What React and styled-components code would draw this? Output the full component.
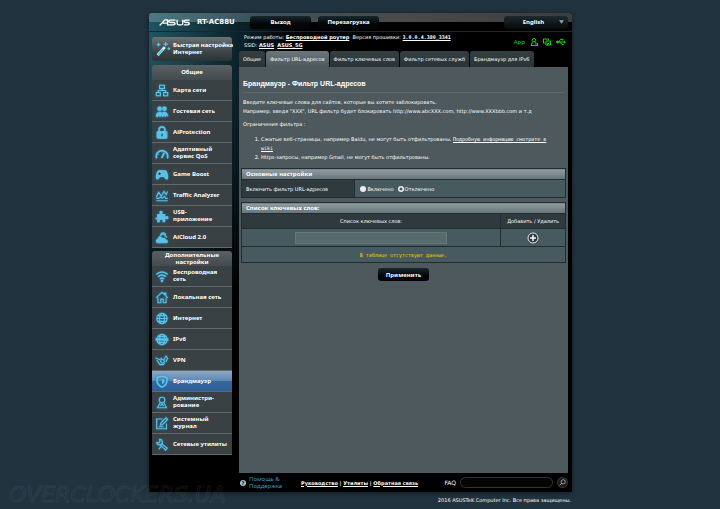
import React, { useState } from "react";
import styled, { createGlobalStyle } from "styled-components";

const icons = {
  map: (
    <>
      <rect x="5" y="1.5" width="6" height="4" />
      <rect x="1" y="10.5" width="5" height="4" />
      <rect x="10" y="10.5" width="5" height="4" />
      <path d="M8 5.5v2.5M3.5 10.5V8h9v2.5" />
    </>
  ),
  guests: (
    <g fill="currentColor" strokeWidth="0.5">
      <circle cx="5" cy="4.5" r="2.7" />
      <circle cx="11" cy="4.5" r="2.7" />
      <path d="M0.5 14c0-4 2-5.500 4.500-5.500S8 9 8 11c0-2 1-2.500 3-2.500s4.500 1.500 4.500 5.500l-2-1-1.500 2-1.500-2-1.500 2L7 13l-1.500 2L4 13l-1.500 2z" />
    </g>
  ),
  lock: (
    <>
      <path d="M4.500 7V4.500a3.500 3.500 0 0 1 7 0V7" strokeWidth="2" />
      <rect x="2" y="7" width="12" height="8" rx="1" fill="currentColor" />
      <path d="M8 9.500v3" stroke="#2c3a40" />
    </>
  ),
  gauge: (
    <>
      <path d="M1.500 14a7 7 0 1 1 13 0" strokeWidth="2.200" />
      <path d="M7.500 13.500l3.500-6.500" strokeWidth="2.200" />
      <path d="M3.500 9l1 .5M8 5.500v1" />
    </>
  ),
  game: (
    <>
      <path
        d="M4 3.500h8c2 0 3.500 8 2.800 9.500s-2.500 0-4.300-2.500h-5C3.700 13 2 14.500 1.200 13S2 3.500 4 3.500z"
        fill="currentColor"
      />
      <path d="M3.500 7h3M5 5.500v3M10.500 6h.1M12 8h.1" stroke="#2c3a40" />
    </>
  ),
  traffic: (
    <>
      <path d="M1 10l3-6 3 5 3.500-6L13 7l2-4" />
      <path d="M1 11.500h3l2-1.500 2 1.500 3-2.500 1.500 2.500H15M1 14.500h14" />
    </>
  ),
  puzzle: (
    <path
      d="M2 5h3.500C4 2 5 1 6.800 1s2.700 1.500 1.400 4H12v3c3-1.500 4-.3 4 1.400s-1.500 2.500-4 1.300V15H8.500c1-2.300 0-3-1.500-3s-2.500 1-1.300 3H2v-3.500C0 12.500-.5 11 .3 9.500L2 9z"
      fill="currentColor"
      strokeWidth="0"
    />
  ),
  cloud: (
    <>
      <path d="M3 9l6-6 5 5M6 4.500C8 1 12 1.500 12.500 5" />
      <path
        d="M3 14.500c-3-.5-2.500-4 0-4 .5-3 4.500-3.500 5.500-1 2-1 3.500 0 3.500 1.500 3.500 0 3 3.500 1 3.500z"
        fill="currentColor"
      />
    </>
  ),
  wifi: (
    <>
      <path
        d="M1 5.500c4-4 10-4 14 0M3.200 8.300c3-3 6.600-3 9.600 0M5.500 11c1.500-1.500 3.500-1.500 5 0"
        strokeWidth="1.900"
      />
      <circle cx="8" cy="13.500" r="1" fill="currentColor" />
    </>
  ),
  home: <path d="M.8 8.500L8 1.500l3 3V2.500h1.800v3.800l2.400 2.200M3 8v6.500h3.500V10h3v4.500H13V8" />,
  globe: (
    <>
      <circle cx="8" cy="8" r="6.300" />
      <ellipse cx="8" cy="8" rx="3" ry="6.300" />
      <path d="M1.700 8h12.600M3 4.500h10M3 11.500h10" />
    </>
  ),
  ipv6: (
    <>
      <circle cx="8" cy="8" r="6.300" />
      <ellipse cx="8" cy="8" rx="3" ry="6.300" />
      <path d="M3 4.500h10M3 11.500h10" />
      <path d="M0 8h16" strokeWidth="3" />
    </>
  ),
  vpn: (
    <>
      <path d="M0 4.500l5 2.500 3-2M1.500 7.500l4 5.500h4l2-2" />
      <circle cx="8.500" cy="9" r="2.300" />
      <path d="M10 7.500l3-5 2 3-2.500 4.500" />
    </>
  ),
  shield: (
    <>
      <path d="M8 1.500L14 3v4.500c0 3.500-2.500 6-6 7.500-3.500-1.500-6-4-6-7.500V3z" strokeWidth="2" />
      <path d="M8 5v6.500c2-1 3-2 3-4.500V5.500z" fill="currentColor" strokeWidth="0" />
    </>
  ),
  admin: (
    <>
      <circle cx="8" cy="5" r="3.500" />
      <path d="M5.500 8.500L2.500 14.500h11l-3-6M6 12l2-2 2 2" />
    </>
  ),
  log: (
    <>
      <path d="M13.500 8v6.500h-12v-12H9" />
      <path d="M6 10l.5-2.500L13 1l2 2-6.500 6.500zM4 12h6" />
    </>
  ),
  tools: (
    <>
      <path d="M5 1.500a3.500 3.500 0 1 1-3.500 4L4 6l1.500-1.500z" />
      <path d="M8 7.500l6.500 5-2 2.500-6-6z" />
      <path d="M7 10l-3 4" />
    </>
  )
};

const Icon = ({ name }) => (
  <IconSvg viewBox="0 0 16 16" aria-hidden="true">
    {icons[name]}
  </IconSvg>
);

const menus = [
  {
    title: "Общие",
    items: [
      ["map", "Карта сети"],
      ["guests", "Гостевая сеть"],
      ["lock", "AiProtection"],
      ["gauge", "Адаптивный\nсервис QoS"],
      ["game", "Game Boost"],
      ["traffic", "Traffic Analyzer"],
      ["puzzle", "USB-\nприложение"],
      ["cloud", "AiCloud 2.0"]
    ]
  },
  {
    title: "Дополнительные\nнастройки",
    items: [
      ["wifi", "Беспроводная\nсеть"],
      ["home", "Локальная сеть"],
      ["globe", "Интернет"],
      ["ipv6", "IPv6"],
      ["vpn", "VPN"],
      ["shield", "Брандмауэр"],
      ["admin", "Администри-\nрование"],
      ["log", "Системный\nжурнал"],
      ["tools", "Сетевые утилиты"]
    ]
  }
];

const tabs = [
  "Общие",
  "Фильтр URL-адресов",
  "Фильтр ключевых слов",
  "Фильтр сетевых служб",
  "Брандмауэр для IPv6"
];

const Header = () => (
  <TopBar>
    <Brand>
      <Logo viewBox="0 0 94 20" role="img" aria-label="ASUS">
        <path d="M2 19L18 2h8v17M11 12h13M50 3H35q-6 0-6 3.500t6 3.500h9q5 0 5 3.500t-5 3.500H28M55 2v10q0 5 5 5h7q5 0 5-5V2M93 3H81q-5 0-5 3.500t5 3.500h6q5 0 5 3.500t-5 3.500H75" />
      </Logo>
      <Model>RT-AC88U</Model>
    </Brand>
    <DarkButton>Выход</DarkButton>
    <DarkButton>Перезагрузка</DarkButton>
    <LangBox>
      <Lang aria-label="Язык">
        <option>English</option>
      </Lang>
      <Arrow viewBox="0 0 6 4" aria-hidden="true">
        <path d="M0 0h6L3 4z" />
      </Arrow>
    </LangBox>
  </TopBar>
);

const Sidebar = () => (
  <Side>
    <QuickButton>
      <Wand viewBox="0 0 18 18" aria-hidden="true">
        <path d="M3 16L11 7" stroke="#e8f7ff" strokeWidth="3" />
        <path d="M3.500 15.500L9 9.500" stroke="#4cc9f2" strokeWidth="2" />
        <path
          d="M12 1v5M9.500 3.500h5M4 2v4M2 4h4M15.500 7v3M14 8.500h3"
          stroke="#4cc9f2"
          strokeWidth="1.500"
        />
      </Wand>
      <MenuText>{"Быстрая настройка\nИнтернет"}</MenuText>
    </QuickButton>
    {menus.map(menu => (
      <Menu key={menu.title}>
        <MenuTitle>{menu.title}</MenuTitle>
        {menu.items.map(([icon, label]) => (
          <MenuItem key={label} href="#" $active={label === "Брандмауэр"}>
            <Icon name={icon} />
            <MenuText>{label}</MenuText>
          </MenuItem>
        ))}
      </Menu>
    ))}
  </Side>
);

const Status = () => (
  <StatusRow>
    <div>
      Режим работы: <InfoLink href="#">Беспроводной роутер</InfoLink> &nbsp;Версия
      прошивки: <VersionLink href="#">3.0.0.4.380_3341</VersionLink>
      <br />
      SSID: <InfoLink href="#">ASUS</InfoLink> &nbsp;<InfoLink href="#">ASUS_5G</InfoLink>
    </div>
    <StatusIcons>
      App
      <StatusSvg viewBox="0 0 16 16">
        <circle cx="8" cy="4.500" r="3.500" />
        <path d="M5 8l-3 7h9M11 8l1 2M12 10v5M15 10v5M10 15h6" />
      </StatusSvg>
      <StatusSvg viewBox="0 0 16 16">
        <path d="M5 10H1V2h10v3M6 6h9v8H6zM9 14v-3h3" />
      </StatusSvg>
      <StatusSvg viewBox="0 0 20 16" $wide>
        <path d="M0 8h18M5 8l4-5h3M8 8l4 5h2" />
        <path d="M16 5l4 3-4 3z" fill="currentColor" strokeWidth="0" />
        <circle cx="3" cy="8" r="2" fill="currentColor" />
        <circle cx="13" cy="3" r="1" />
        <circle cx="14" cy="13" r="1" />
      </StatusSvg>
    </StatusIcons>
  </StatusRow>
);

const FilterForm = () => {
  const [enabled, setEnabled] = useState(false);
  const [keyword, setKeyword] = useState("");

  return (
    <>
      <Table>
        <colgroup>
          <col width="35%" />
          <col />
        </colgroup>
        <thead>
          <tr>
            <Caption colSpan="2">Основные настройки</Caption>
          </tr>
        </thead>
        <tbody>
          <tr>
            <Th scope="row">Включить фильтр URL-адресов</Th>
            <Td>
              <Radios>
                <Label>
                  <Radio name="filter" checked={enabled} onChange={() => setEnabled(true)} />
                  Включено
                </Label>
                <Label>
                  <Radio name="filter" checked={!enabled} onChange={() => setEnabled(false)} />
                  Отключено
                </Label>
              </Radios>
            </Td>
          </tr>
        </tbody>
      </Table>
      <Table>
        <colgroup>
          <col width="80%" />
          <col />
        </colgroup>
        <thead>
          <tr>
            <Caption colSpan="2">Список ключевых слов:</Caption>
          </tr>
          <tr>
            <Th $center $short>
              <label htmlFor="keyword">Список ключевых слов:</label>
            </Th>
            <Th $center $short>
              Добавить / Удалить
            </Th>
          </tr>
        </thead>
        <tbody>
          <tr>
            <Td $center>
              <Keyword id="keyword" value={keyword} onChange={e => setKeyword(e.target.value)} />
            </Td>
            <Td $center>
              <AddButton aria-label="Добавить">
                <svg viewBox="0 0 12 12" width="12" height="12">
                  <circle cx="6" cy="6" r="5" fill="#2b363a" stroke="#e6eaeb" />
                  <path d="M6 3v6M3 6h6" stroke="#fff" strokeWidth="1.500" />
                </svg>
              </AddButton>
            </Td>
          </tr>
          <tr>
            <Empty colSpan="2">В таблице отсутствуют данные.</Empty>
          </tr>
        </tbody>
      </Table>
    </>
  );
};

const Footer = () => (
  <Foot>
    <Help href="#">
      <HelpIcon>?</HelpIcon>
      <span>
        Помощь &<br />
        Поддержка
      </span>
    </Help>
    <FootLinks>
      <a href="#">Руководство</a> | <a href="#">Утилиты</a> | <a href="#">Обратная связь</a>
    </FootLinks>
    <Faq>
      <label htmlFor="faq">FAQ</label>
      <FaqInput id="faq" />
      <SearchButton aria-label="Поиск">
        <svg viewBox="0 0 10 10" width="7" height="7">
          <circle cx="6" cy="4" r="3" fill="none" stroke="#ccc" />
          <path d="M4 6L1 9" stroke="#ccc" />
        </svg>
      </SearchButton>
    </Faq>
  </Foot>
);

const App = () => (
  <Page>
    <GlobalStyle />
    <Frame>
      <Header />
      <Columns>
        <Sidebar />
        <Main>
          <Status />
          <Tabs>
            {tabs.map((tab, i) => (
              <Tab key={tab} href="#" $active={i === 1}>
                {tab}
              </Tab>
            ))}
          </Tabs>
          <Content>
            <Title>Брандмауэр - Фильтр URL-адресов</Title>
            <Text>
              Введите ключевые слова для сайтов, которые вы хотите заблокировать.
              <br />
              Например, введя "XXX", URL фильтр будет блокировать http://www.abcXXX.com,
              http://www.XXXbbb.com и т.д
            </Text>
            <Text>Ограничения фильтра :</Text>
            <List>
              <li>
                Сжатые веб-страницы, например Baidu, не могут быть отфильтрованы.{" "}
                <WikiLink href="#">Подробную информацию смотрите в wiki</WikiLink>
              </li>
              <li>Https-запросы, например Gmail, не могут быть отфильтрованы.</li>
            </List>
            <FilterForm />
            <Apply>Применить</Apply>
          </Content>
          <Footer />
        </Main>
      </Columns>
    </Frame>
    <Copyright>2016 ASUSTeK Computer Inc. Все права защищены.</Copyright>
    <Watermark>OVERCLOCKERS.UA</Watermark>
  </Page>
);

export default App;

const GlobalStyle = createGlobalStyle`
  * {
    box-sizing: border-box;
  }
  body {
    margin: 0;
    background: #21333e;
    color: #fff;
    font: 5px/8px "DejaVu Sans", Verdana, sans-serif;
  }
  a {
    color: inherit;
  }
  button, input, select {
    margin: 0;
    padding: 0;
    border: 0;
    font: inherit;
    color: inherit;
  }
`;

const Page = styled.div`
  position: relative;
  padding: 13px 148px 0 149px;
`;

const Frame = styled.div`
  padding: 0 4px 0 3px;
  border-radius: 3px 3px 0 0;
  background: radial-gradient(ellipse 150px 320px at 0 20px, #1f5563, #0b222a 60%, transparent),
    #000;
  box-shadow: 0 1px 5px #101b22;
`;

const TopBar = styled.header`
  display: flex;
  align-items: center;
  gap: 7px;
  height: 19px;
  margin: 0 -4px 0 -3px;
  padding: 0 4px 0 10px;
  border-bottom: 1px solid #17292f;
  border-radius: 3px 3px 0 0;
  background: linear-gradient(90deg, #4b7983, #3a525a 25%, #4a4a4a 60%, #3d3d3d) 0 0 / 100% 9px
    no-repeat;
`;

const Brand = styled.div`
  display: flex;
  align-items: center;
  gap: 7px;
  width: 84px;
`;

const Logo = styled.svg`
  width: 31px;
  height: 7px;
  fill: none;
  stroke: #fff;
  stroke-width: 4;
`;

const Model = styled.span`
  font: bold 7px/8px "DejaVu Sans", sans-serif;
`;

const DarkButton = styled.button`
  width: 61px;
  height: 13px;
  border-radius: 3px;
  background: linear-gradient(#18282d, #030607 60%);
  font: bold 6px/8px "Noto Sans", sans-serif;
  cursor: pointer;
`;

const LangBox = styled.div`
  display: flex;
  align-items: center;
  width: 64px;
  height: 13px;
  margin-left: auto;
  padding: 0 4px;
  border-radius: 3px;
  background: linear-gradient(#1d2a2e, #05090a);
`;

const Lang = styled.select`
  flex: 1;
  appearance: none;
  background: none;
  text-align: center;
  font: bold 6px/8px "Noto Sans", sans-serif;
`;

const Arrow = styled.svg`
  width: 5px;
  height: 4px;
  fill: #8fa3aa;
`;

const Columns = styled.div`
  display: flex;
  gap: 7px;
`;

const Side = styled.aside`
  flex: 0 0 80px;
  min-width: 0;
  padding-top: 5px;
`;

const QuickButton = styled.button`
  display: flex;
  align-items: center;
  gap: 2px;
  width: 100%;
  height: 24px;
  margin-bottom: 4px;
  padding-left: 3px;
  border-radius: 3px;
  background: linear-gradient(#6a7274, #3c4547 60%, #2c3335);
  text-align: left;
  cursor: pointer;
`;

const Wand = styled.svg`
  flex: none;
  width: 16px;
  height: 18px;
  fill: none;
`;

const Menu = styled.nav`
  margin-bottom: 3px;
`;

const MenuTitle = styled.div`
  display: flex;
  align-items: center;
  justify-content: center;
  height: 15px;
  border-radius: 3px 3px 0 0;
  background: linear-gradient(#596164, #434b4e);
  font: bold 6px/7px "Noto Sans", sans-serif;
  text-align: center;
  white-space: pre;
`;

const MenuItem = styled.a`
  display: flex;
  align-items: center;
  gap: 4px;
  height: 21px;
  padding-left: 3px;
  border-bottom: 1px solid #62696b;
  background: ${props =>
    props.$active ? "linear-gradient(#8fa9c6, #5f88b4 48%, #35679f 50%, #2f5f97)" : "#394144"};
  text-decoration: none;
`;

const MenuText = styled.span`
  font: bold 6px/7px "Noto Sans", sans-serif;
  white-space: pre;
`;

const IconSvg = styled.svg`
  flex: none;
  width: 14px;
  height: 13px;
  fill: none;
  color: #5fc0e6;
  stroke: currentColor;
  stroke-width: 1.4;
  filter: drop-shadow(0 0 1px #1a86b4);
`;

const Main = styled.main`
  flex: 1;
  min-width: 0;
`;

const StatusRow = styled.div`
  display: flex;
  justify-content: space-between;
  height: 19px;
  padding: 1px 2px 0 5px;
`;

const InfoLink = styled.a`
  font-weight: bold;
`;

const VersionLink = styled(InfoLink)`
  font-family: "DejaVu Sans Mono", monospace;
`;

const StatusIcons = styled.div`
  display: flex;
  align-items: center;
  gap: 5px;
  color: #19d419;
  font: 6px/8px "Noto Sans", sans-serif;
`;

const StatusSvg = styled.svg`
  width: ${props => (props.$wide ? "10px" : "8px")};
  height: 8px;
  fill: none;
  stroke: currentColor;
  stroke-width: 2;
`;

const Tabs = styled.nav`
  display: flex;
  gap: 1px;
`;

const Tab = styled.a`
  height: 16px;
  padding: 0 4px;
  border-radius: 3px 3px 0 0;
  background: ${props =>
    props.$active ? "linear-gradient(#6b777b, #4d595d)" : "linear-gradient(#353f42, #2a3336)"};
  line-height: 16px;
  text-decoration: none;
  white-space: nowrap;
`;

const Content = styled.section`
  min-height: 406px;
  padding: 12px 2px;
  background: #4d595d;
`;

const Title = styled.h1`
  margin: 0 2px 5px;
  padding-bottom: 4px;
  border-bottom: 1px solid #5c686c;
  font: bold 7px/9px "Liberation Sans", Arial, sans-serif;
`;

const Text = styled.p`
  margin: 0 2px 4px;
  line-height: 9px;
`;

const List = styled.ol`
  margin: 0 0 6px;
  padding: 2px 8px 0 20px;
  line-height: 9px;
`;

const WikiLink = styled.a`
  font-family: "DejaVu Sans Mono", monospace;
`;

const Table = styled.table`
  width: 100%;
  margin-bottom: 4px;
  border: 1px solid #222d31;
  border-collapse: collapse;
  table-layout: fixed;
`;

const Caption = styled.th`
  height: 11px;
  padding: 0 4px;
  background: linear-gradient(#8f9da2, #65747a);
  font: bold 6px/8px "Noto Sans", sans-serif;
  text-align: left;
`;

const Td = styled.td`
  height: 18px;
  padding: 0 5px;
  border: 1px solid #222d31;
  background: #475a5f;
  text-align: ${props => (props.$center ? "center" : "left")};
`;

const Th = styled.th`
  height: ${props => (props.$short ? "15px" : "18px")};
  padding: 0 4px;
  border: 1px solid #222d31;
  background: #2f3a3e;
  font-weight: normal;
  text-align: ${props => (props.$center ? "center" : "left")};
`;

const Empty = styled(Td)`
  height: 16px;
  color: #fc0;
  font: 5px/8px "DejaVu Sans Mono", monospace;
  text-align: center;
`;

const Radios = styled.div`
  display: flex;
  gap: 4px;
`;

const Label = styled.label`
  display: flex;
  align-items: center;
  gap: 1px;
`;

const Radio = styled.input.attrs({ type: "radio" })`
  appearance: none;
  width: 6px;
  height: 6px;
  border-radius: 50%;
  background: #eee;

  &:checked {
    background: radial-gradient(#555 20%, #eee 45%);
  }
`;

const Keyword = styled.input`
  display: block;
  width: 61%;
  height: 12px;
  margin: 0 auto;
  border: 1px solid #6a777b;
  background: #576a6e;
`;

const AddButton = styled.button`
  display: block;
  height: 12px;
  margin: 0 auto;
  background: none;
  cursor: pointer;
`;

const Apply = styled(DarkButton)`
  display: block;
  width: 51px;
  margin: 5px auto 0;
`;

const Foot = styled.footer`
  display: flex;
  align-items: center;
  height: 19px;
  padding-left: 1px;
`;

const Help = styled.a`
  display: flex;
  align-items: center;
  gap: 3px;
  width: 61px;
  color: #3f93cf;
  font: 6px/7px "Noto Sans", sans-serif;
  text-decoration: none;
`;

const HelpIcon = styled.span`
  width: 6px;
  height: 6px;
  border-radius: 50%;
  background: #9fc3d6;
  color: #000;
  font: bold 5px/6px "DejaVu Sans", sans-serif;
  text-align: center;
`;

const FootLinks = styled.div`
  font-weight: bold;
`;

const Faq = styled.div`
  display: flex;
  align-items: center;
  gap: 4px;
  margin-left: auto;
  font-size: 6px;
`;

const FaqInput = styled.input`
  width: 93px;
  height: 11px;
  border: 1px solid #333;
  border-radius: 6px;
  background: #050505;
`;

const SearchButton = styled.button`
  display: flex;
  align-items: center;
  justify-content: center;
  width: 11px;
  height: 11px;
  border: 1px solid #3a3a3a;
  border-radius: 50%;
  background: #1a1a1a;
`;

const Copyright = styled.div`
  padding: 4px 1px;
  text-align: right;
`;

const Watermark = styled.div`
  position: absolute;
  left: 9px;
  bottom: 0;
  color: transparent;
  font: italic 22px/26px "DejaVu Sans", sans-serif;
  -webkit-text-stroke: 1px rgba(110, 122, 130, 0.18);
  pointer-events: none;
`;
